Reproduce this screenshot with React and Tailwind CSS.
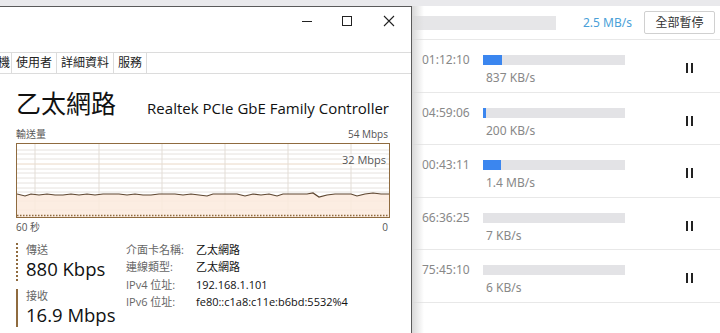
import React from 'react';

const cjk = { fontFamily: '"Open Sans", "Noto Sans CJK TC", sans-serif' };

const rows = [
  { time: '01:12:10', pct: 19, speed: '837 KB/s' },
  { time: '04:59:06', pct: 3, speed: '200 KB/s' },
  { time: '00:43:11', pct: 18, speed: '1.4 MB/s' },
  { time: '66:36:25', pct: 0, speed: '7 KB/s' },
  { time: '75:45:10', pct: 0, speed: '6 KB/s' },
];

// puntos de la línea de recepción (x, y) dentro del gráfico 372x73
const recv = [
  [0, 50], [8, 52], [14, 50], [22, 51], [30, 50], [38, 51], [46, 51], [54, 50], [62, 51], [70, 50],
  [78, 51], [86, 50], [94, 50], [102, 50], [110, 51], [118, 50], [126, 51], [134, 51], [142, 50],
  [150, 50], [158, 50], [166, 51], [174, 50], [182, 51], [190, 52], [196, 50], [204, 50], [212, 50],
  [220, 50], [228, 52], [236, 50], [244, 51], [252, 50], [260, 52], [266, 50], [274, 50], [282, 50],
  [290, 50], [296, 49], [302, 53], [310, 51], [318, 50], [326, 50], [334, 50], [340, 52], [348, 50],
  [356, 49], [364, 50], [372, 50],
];

function Graph() {
  const line = recv.map(([x, y]) => `${x},${y}`).join(' ');
  const area = `0,73 ${line} 372,73`;
  const hLines = [6, 10, 15, 20, 25, 29, 34, 39, 44, 48, 57, 66];
  const vLines = [18, 82, 145, 208, 271, 334];
  return (
    <svg width="372" height="73" viewBox="0 0 372 73" className="block">
      {hLines.map((y) => (
        <line key={y} x1="0" x2="372" y1={y} y2={y} stroke={y === 20 ? '#ead8c6' : '#e6e2de'} strokeWidth="1" />
      ))}
      {vLines.map((x) => (
        <line key={x} x1={x} x2={x} y1="0" y2="73" stroke="#e3ddd6" strokeWidth="1" />
      ))}
      <polygon points={area} fill="#fbeadd" fillOpacity="0.85" />
      <polyline points={line} fill="none" stroke="#5e4630" strokeWidth="1.2" />
      <line x1="0" x2="372" y1="71.5" y2="71.5" stroke="#8f6b3f" strokeWidth="1.3" strokeDasharray="1.5 1.5" />
    </svg>
  );
}

function TaskManager() {
  return (
    <div className="w-[412px] shrink-0 bg-white border-t border-r border-[#5a5a5a] flex flex-col relative z-10" style={cjk}>
      {/* barra de título */}
      <div className="h-[45px] flex justify-end items-start pt-[6px] text-[#222]">
        <div className="w-[40px] h-[16px] flex items-center justify-center">
          <div className="w-[10px] h-px bg-[#222]" />
        </div>
        <div className="w-[40px] h-[16px] flex items-center justify-center">
          <div className="w-[10px] h-[10px] border border-[#222]" />
        </div>
        <div className="w-[44px] h-[16px] flex items-center justify-center">
          <svg width="12" height="12" viewBox="0 0 12 12">
            <path d="M1 1 L11 11 M11 1 L1 11" stroke="#222" strokeWidth="1.1" />
          </svg>
        </div>
      </div>
      {/* pestañas */}
      <div className="h-[22px] border-t border-b border-[#dcdcdc] flex text-[12px] text-[#222] leading-[20px] overflow-hidden">
        <div className="-ml-[2px] pr-[1px] border-r border-[#dcdcdc]">機</div>
        <div className="px-[4px] border-r border-[#dcdcdc]">使用者</div>
        <div className="px-[4px] border-r border-[#dcdcdc]">詳細資料</div>
        <div className="px-[4px] border-r border-[#dcdcdc]">服務</div>
      </div>
      {/* encabezado */}
      <div className="px-[16px] pt-[14px] flex items-end justify-between">
        <div className="text-[25px] leading-[30px] text-[#111]">乙太網路</div>
        <div className="text-[15px] leading-[20px] text-[#111] mr-[6px]">Realtek PCIe GbE Family Controller</div>
      </div>
      <div className="px-[16px] mt-[10px] w-[404px]">
        <div className="flex justify-between text-[10px] leading-[12px] text-[#555]">
          <span>輸送量</span>
          <span>54 Mbps</span>
        </div>
        <div className="relative mt-[3px] border border-[#8f6b3f] w-[374px]">
          <Graph />
          <div className="absolute right-[3px] top-[10px] text-[11px] leading-[12px] text-[#555] bg-white/60">32 Mbps</div>
        </div>
        <div className="flex justify-between text-[10px] leading-[12px] text-[#555] mt-[3px]">
          <span>60 秒</span>
          <span>0</span>
        </div>
      </div>
      {/* estadísticas */}
      <div className="px-[16px] mt-[10px] flex">
        <div className="w-[110px] flex flex-col">
          <div className="border-l-2 border-dotted border-[#8f6b3f] pl-[8px]">
            <div className="h-[14px] text-[11px] leading-[14px] text-[#666]">傳送</div>
            <div className="h-[24px] text-[18.5px] leading-[24px] text-[#111]">880 Kbps</div>
          </div>
          <div className="border-l-2 border-[#8f6b3f] pl-[8px] mt-[8px]">
            <div className="h-[14px] text-[11px] leading-[14px] text-[#666]">接收</div>
            <div className="h-[24px] text-[18.5px] leading-[24px] text-[#111]">16.9 Mbps</div>
          </div>
        </div>
        <div className="grid grid-cols-[70px_1fr] auto-rows-[17.3px] text-[11px] leading-[17px] -mt-[2px]">
          <span className="text-[#666]">介面卡名稱:</span>
          <span className="text-[#111]">乙太網路</span>
          <span className="text-[#666]">連線類型:</span>
          <span className="text-[#111]">乙太網路</span>
          <span className="text-[#666]">IPv4 位址:</span>
          <span className="text-[#111]">192.168.1.101</span>
          <span className="text-[#666]">IPv6 位址:</span>
          <span className="text-[#111]">fe80::c1a8:c11e:b6bd:5532%4</span>
        </div>
      </div>
    </div>
  );
}

function PauseIcon() {
  return (
    <div className="flex gap-[3px]">
      <div className="w-[2px] h-[10px] bg-[#222]" />
      <div className="w-[2px] h-[10px] bg-[#222]" />
    </div>
  );
}

function Downloads() {
  return (
    <div className="flex-1 relative bg-white" style={{ fontFamily: '"Noto Sans", "Noto Sans CJK TC", sans-serif' }}>
      <div className="absolute left-0 top-0 bottom-0 w-[12px] bg-gradient-to-r from-[#d8d8d8] to-transparent" />
      <div className="h-[34px] border-b border-[#e8e8e8] flex items-center">
        <div className="w-[144px] h-[14px] bg-[#e6e6e8]" />
        <div className="ml-[27px] text-[12px] text-[#4a9fd8]">2.5 MB/s</div>
        <div className="ml-[12px] w-[71px] h-[23px] border border-[#d0d0d0] rounded-[2px] flex items-center justify-center text-[12px] text-[#333]">全部暫停</div>
      </div>
      {rows.map((r) => (
        <div key={r.time} className="h-[52.5px] border-b border-[#e8e8e8] flex pl-[10px]">
          <div className="w-[61px] pt-[11px] text-[12px] leading-[18px] text-[#888]">{r.time}</div>
          <div className="pt-[15px] w-[142px]">
            <div className="h-[10px] bg-[#e3e3e6]">
              <div className="h-full bg-[#3b86ef]" style={{ width: `${r.pct}px` }} />
            </div>
            <div className="mt-[5px] ml-[3px] text-[12px] leading-[16px] text-[#888]">{r.speed}</div>
          </div>
          <div className="ml-[61px] pt-[23px]">
            <PauseIcon />
          </div>
        </div>
      ))}
    </div>
  );
}

export default function App() {
  return (
    <div className="w-[720px] h-[333px] overflow-hidden bg-white flex flex-col">
      <div className="h-[6px] bg-[#e9e9ec] shrink-0" />
      <div className="flex flex-1 min-h-0">
        <TaskManager />
        <Downloads />
      </div>
    </div>
  );
}
